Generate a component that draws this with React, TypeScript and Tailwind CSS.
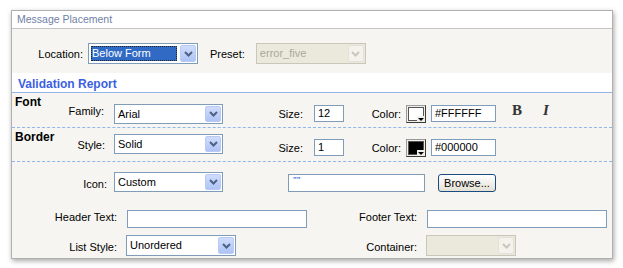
import React from 'react';
import clsx from 'clsx';

const Chevron: React.FC<{ color: string }> = ({ color }) => (
  <svg width="9" height="6" viewBox="0 0 9 6">
    <path d="M1 1 L4.5 4.5 L8 1" fill="none" stroke={color} strokeWidth="2" />
  </svg>
);

interface SelectProps {
  value?: string;
  className?: string;
  disabled?: boolean;
  selected?: boolean;
}

const Select: React.FC<SelectProps> = ({ value, className, disabled, selected }) => (
  <div
    className={clsx(
      'flex border shrink-0',
      disabled ? 'border-[#c9c7ba] bg-[#ebe9dc]' : 'border-[#7f9db9] bg-white',
      className
    )}
  >
    <div className="flex-1 flex items-center min-w-0">
      {selected ? (
        <span className="flex-1 mx-[2px] h-[15px] pl-[1px] flex items-center bg-[#316ac5] text-white outline-1 outline-dotted outline-[#222] -outline-offset-1">
          {value}
        </span>
      ) : (
        <span className={clsx('pl-[3px]', disabled ? 'text-[#aca899]' : 'text-black')}>{value}</span>
      )}
    </div>
    <div
      className={clsx(
        'w-[16px] m-px rounded-[2px] border flex items-center justify-center',
        disabled
          ? 'border-[#e4e2d8] bg-[#f3f2ec]'
          : 'border-[#b9cbf5] bg-linear-to-b from-[#d0dcfc] to-[#aec4f6]'
      )}
    >
      <Chevron color={disabled ? '#c9c7bc' : '#4d6185'} />
    </div>
  </div>
);

const Input: React.FC<{ className?: string; children?: React.ReactNode }> = ({ className, children }) => (
  <div className={clsx('border border-[#7f9db9] bg-white shrink-0 pl-[3px] flex items-center', className)}>
    {children}
  </div>
);

const Swatch: React.FC<{ color: string; className?: string }> = ({ color, className }) => (
  <div
    className={clsx(
      'relative w-[20px] h-[18px] shrink-0 border border-t-[#9a9a9a] border-l-[#9a9a9a] border-r-[#3a3a3a] border-b-[#3a3a3a] p-px bg-[#f0efe9]',
      className
    )}
  >
    <div className="w-full h-full border border-[#555]" style={{ background: color }} />
    <div className="absolute right-[1px] bottom-[1px] w-[7px] h-[5px] bg-[#f0efe9] flex items-end justify-center">
      <div className="w-0 h-0 border-l-[3px] border-r-[3px] border-t-[3px] border-l-transparent border-r-transparent border-t-black" />
    </div>
  </div>
);

const Label: React.FC<{ className?: string; children: React.ReactNode }> = ({ className, children }) => (
  <div className={clsx('shrink-0 text-right leading-[14px] text-black', className)}>{children}</div>
);

export default function App() {
  return (
    <div
      className="w-[623px] h-[268px] bg-white pt-[10px] pl-[11px] text-[11px]"
      style={{ fontFamily: '"Liberation Sans", Arial, sans-serif' }}
    >
      <div className="w-[602px] border border-[#b0b0b0] bg-[#f7f5f1] shadow-[1px_2px_5px_rgba(0,0,0,0.35)]">
        {/* header */}
        <div className="h-[18px] bg-white border-b border-[#c4c4c4] pl-[5px] pt-[1px] text-[10.5px] leading-[14px] text-[#6f81a6]">
          Message Placement
        </div>

        {/* location */}
        <div className="h-[44px] flex items-start">
          <Label className="w-[71px] mt-[18px]">Location:</Label>
          <Select value="Below Form" selected className="ml-[5px] mt-[14px] w-[110px] h-[21px]" />
          <Label className="ml-[12px] mt-[18px]">Preset:</Label>
          <Select value="error_five" disabled className="ml-[11px] mt-[14px] w-[110px] h-[21px]" />
        </div>

        {/* section title */}
        <div className="h-[20px] bg-white border-b border-[#93b6ee] pl-[6px] pt-[4px] text-[12px] leading-[14px] font-bold text-[#3b5fe3]">
          Validation Report
        </div>

        {/* font row */}
        <div className="h-[35px] border-b border-dashed border-[#8fb6ef] flex items-start">
          <div className="w-[55px] pl-[3px] mt-[2px] text-[12px] leading-[14px] font-bold text-black">Font</div>
          <Label className="w-[37px] mt-[11px]">Family:</Label>
          <Select value="Arial" className="ml-[10px] mt-[11px] w-[109px] h-[20px]" />
          <Label className="w-[80px] mt-[14px]">Size:</Label>
          <Input className="ml-[11px] mt-[12px] w-[30px] h-[17px]">12</Input>
          <Label className="w-[57px] mt-[14px]">Color:</Label>
          <Swatch color="#ffffff" className="ml-[5px] mt-[12px]" />
          <Input className="ml-[5px] mt-[12px] w-[65px] h-[17px]">#FFFFFF</Input>
          <div
            className="ml-[16px] mt-[10px] text-[15px] leading-[15px] font-bold text-[#333]"
            style={{ fontFamily: '"Liberation Serif", serif' }}
          >
            B
          </div>
          <div
            className="ml-[21px] mt-[10px] text-[15px] leading-[15px] font-bold italic text-[#333]"
            style={{ fontFamily: '"Liberation Serif", serif' }}
          >
            I
          </div>
        </div>

        {/* border row */}
        <div className="h-[34px] border-b border-dashed border-[#8fb6ef] flex items-start">
          <div className="w-[55px] pl-[3px] mt-[2px] text-[12px] leading-[14px] font-bold text-black">Border</div>
          <Label className="w-[38px] mt-[10px]">Style:</Label>
          <Select value="Solid" className="ml-[9px] mt-[6px] w-[109px] h-[20px]" />
          <Label className="w-[80px] mt-[13px]">Size:</Label>
          <Input className="ml-[11px] mt-[11px] w-[30px] h-[17px]">1</Input>
          <Label className="w-[57px] mt-[13px]">Color:</Label>
          <Swatch color="#000000" className="ml-[5px] mt-[11px]" />
          <Input className="ml-[5px] mt-[11px] w-[65px] h-[17px]">#000000</Input>
        </div>

        {/* icon row */}
        <div className="h-[43px] flex items-start">
          <Label className="w-[95px] mt-[15px]">Icon:</Label>
          <Select value="Custom" className="ml-[7px] mt-[10px] w-[109px] h-[20px]" />
          <div className="ml-[65px] mt-[12px] w-[137px] h-[18px] border border-[#7f9db9] bg-white shrink-0 pl-[4px] text-[8px] leading-[10px] text-[#3a6fd8] font-bold">
            ""
          </div>
          <div className="ml-[13px] mt-[12px] w-[58px] h-[18px] shrink-0 rounded-[3px] border border-[#1c4a82] bg-linear-to-b from-white to-[#e4e1d4] flex items-center justify-center text-black leading-[14px]">
            Browse...
          </div>
        </div>

        {/* header / footer text */}
        <div className="h-[26px] flex items-start">
          <Label className="w-[105px] mt-[5px]">Header Text:</Label>
          <Input className="ml-[10px] mt-[5px] w-[180px] h-[18px]" />
          <Label className="w-[110px] mt-[5px]">Footer Text:</Label>
          <Input className="ml-[10px] mt-[5px] w-[180px] h-[18px]" />
        </div>

        {/* list style / container */}
        <div className="h-[27px] flex items-start">
          <Label className="w-[105px] mt-[9px]">List Style:</Label>
          <Select value="Unordered" className="ml-[9px] mt-[4px] w-[110px] h-[21px]" />
          <Label className="w-[181px] mt-[9px]">Container:</Label>
          <Select value="" disabled className="ml-[9px] mt-[4px] w-[90px] h-[21px]" />
        </div>
      </div>
    </div>
  );
}
